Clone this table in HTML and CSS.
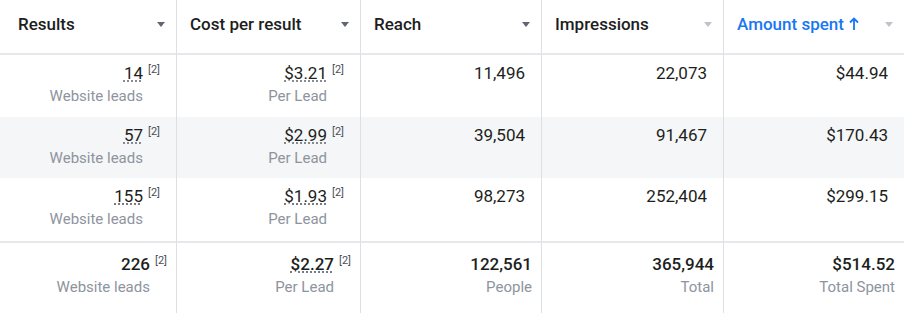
FILE: index.html
```html
<!DOCTYPE html>
<html lang="en">
<head>
<meta charset="utf-8">
<title>Report</title>
<link rel="stylesheet" href="styles.css">
</head>
<body>
<table class="report">
  <colgroup>
    <col class="w1"><col class="w2"><col class="w3"><col class="w4"><col class="w5">
  </colgroup>
  <thead>
    <tr>
      <th class="first"><div class="th-in"><span>Results</span><span class="caret"></span></div></th>
      <th><div class="th-in"><span>Cost per result</span><span class="caret"></span></div></th>
      <th><div class="th-in"><span>Reach</span><span class="caret"></span></div></th>
      <th><div class="th-in"><span>Impressions</span><span class="caret light"></span></div></th>
      <th class="last"><div class="th-in"><span class="sorted">Amount spent<svg class="arrow" width="10" height="14" viewBox="0 0 10 14"><path d="M5 13V2M1 5.5L5 1.5L9 5.5" fill="none" stroke="currentColor" stroke-width="1.8"/></svg></span><span class="caret light"></span></div></th>
    </tr>
  </thead>
  <tbody>
    <tr class="row r1">
      <td><div class="num"><span class="dotted">14</span><sup class="note">[2]</sup></div><div class="sub noted">Website leads</div></td>
      <td><div class="num"><span class="dotted">$3.21</span><sup class="note">[2]</sup></div><div class="sub noted">Per Lead</div></td>
      <td><div class="num">11,496</div></td>
      <td><div class="num">22,073</div></td>
      <td class="last"><div class="num">$44.94</div></td>
    </tr>
    <tr class="row r2">
      <td><div class="num"><span class="dotted">57</span><sup class="note">[2]</sup></div><div class="sub noted">Website leads</div></td>
      <td><div class="num"><span class="dotted">$2.99</span><sup class="note">[2]</sup></div><div class="sub noted">Per Lead</div></td>
      <td><div class="num">39,504</div></td>
      <td><div class="num">91,467</div></td>
      <td class="last"><div class="num">$170.43</div></td>
    </tr>
    <tr class="row r3">
      <td><div class="num"><span class="dotted">155</span><sup class="note">[2]</sup></div><div class="sub noted">Website leads</div></td>
      <td><div class="num"><span class="dotted">$1.93</span><sup class="note">[2]</sup></div><div class="sub noted">Per Lead</div></td>
      <td><div class="num">98,273</div></td>
      <td><div class="num">252,404</div></td>
      <td class="last"><div class="num">$299.15</div></td>
    </tr>
    <tr class="total">
      <td><div class="num bold">226<sup class="note">[2]</sup></div><div class="sub noted">Website leads</div></td>
      <td><div class="num bold"><span class="dotted">$2.27</span><sup class="note">[2]</sup></div><div class="sub noted">Per Lead</div></td>
      <td><div class="num bold">122,561</div><div class="sub">People</div></td>
      <td><div class="num bold">365,944</div><div class="sub">Total</div></td>
      <td class="last"><div class="num bold">$514.52</div><div class="sub">Total Spent</div></td>
    </tr>
  </tbody>
</table>
</body>
</html>
```

FILE: styles.css
```css
html, body {
  margin: 0;
  padding: 0;
  background: #ffffff;
}

body {
  font-family: Roboto, "Liberation Sans", Arial, sans-serif;
  color: #1c1e21;
  overflow: hidden;
}

.report {
  border-collapse: separate;
  border-spacing: 0;
  table-layout: fixed;
  width: 904px;
}

.w1 { width: 177px; }
.w2 { width: 184px; }
.w3 { width: 181px; }
.w4 { width: 182px; }
.w5 { width: 180px; }

.report th {
  padding: 0;
  border-bottom: 2px solid #e6e8eb;
  border-right: 1px solid #dddfe2;
  text-align: left;
}

.report th.last,
.report td.last {
  border-right: none;
}

.th-in {
  height: 53px;
  box-sizing: border-box;
  display: flex;
  align-items: center;
  justify-content: space-between;
  padding: 0 11px 5px 13px;
  font-size: 17px;
  font-weight: 500;
  color: #1c1e21;
}

.first .th-in {
  padding-left: 18px;
}

.caret {
  width: 0;
  height: 0;
  border-left: 4.5px solid transparent;
  border-right: 4.5px solid transparent;
  border-top: 5px solid #606770;
  margin-top: 1px;
}

.caret.light {
  border-top-color: #bec3c9;
}

.sorted {
  color: #1877f2;
  display: inline-flex;
  align-items: center;
  gap: 5px;
}

.arrow {
  display: block;
  margin-top: -1px;
}

.report td {
  box-sizing: border-box;
  vertical-align: top;
  text-align: right;
  padding: 8px 16px 0 8px;
  border-right: 1px solid #dddfe2;
}

.r1 td { height: 62px; }
.r2 td { height: 61px; background: #f5f6f7; }
.r3 td { height: 63px; }

.total td {
  border-top: 2px solid #e6e8eb;
  padding: 11px 9px 0 8px;
  height: 72px;
}

.num {
  font-size: 17px;
  line-height: 20px;
  white-space: nowrap;
}

.num.bold {
  font-weight: 500;
}

.dotted {
  text-decoration: underline dotted #606770;
  text-underline-offset: 2px;
}

.note {
  font-size: 11px;
  line-height: 11px;
  vertical-align: top;
  position: relative;
  top: 1px;
  margin-left: 5px;
  color: #4b4f56;
  font-weight: 400;
}

.sub {
  font-size: 15px;
  line-height: 20px;
  margin-top: 3px;
  color: #8d949e;
  white-space: nowrap;
}

.sub.noted {
  padding-right: 17px;
}
```
